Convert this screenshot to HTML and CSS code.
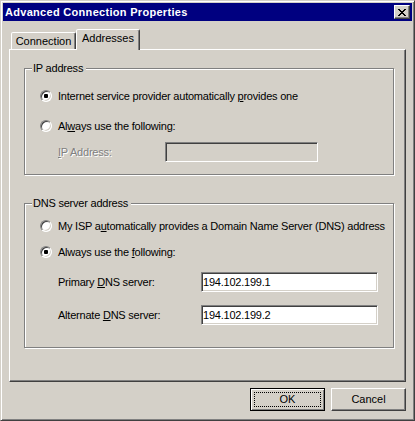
FILE: index.html
```html
<!DOCTYPE html>
<html>
<head>
<meta charset="utf-8">
<title>Advanced Connection Properties</title>
<link rel="stylesheet" href="styles.css">
</head>
<body>
<div class="window">
  <div class="titlebar">
    <span class="title">Advanced Connection Properties</span>
    <span class="close-btn">
      <svg width="8" height="7" viewBox="0 0 8 7" shape-rendering="crispEdges">
        <path fill="#000" d="M0 0h2v1H0zM6 0h2v1H6zM1 1h2v1H1zM5 1h2v1H5zM2 2h4v1H2zM3 3h2v1H3zM2 4h4v1H2zM1 5h2v1H1zM5 5h2v1H5zM0 6h2v1H0zM6 6h2v1H6z"/>
      </svg>
    </span>
  </div>
  <div class="tabs">
    <div class="tab tab-conn">Connection</div>
    <div class="tab tab-selected">Addresses</div>
  </div>
  <div class="panel">
    <div class="group group-ip">
      <span class="caption">IP address</span>
      <div class="row row-first"><span class="radio checked"></span><span>Internet service provider automatically <u>p</u>rovides one</span></div>
      <div class="row row-second"><span class="radio"></span><span>Al<u>w</u>ays use the following:</span></div>
      <div class="field-row field-ip">
        <span class="label label-ip disabled"><u>I</u>P Address:</span>
        <input class="textbox textbox-ip" type="text" value="" disabled>
      </div>
    </div>
    <div class="group group-dns">
      <span class="caption">DNS server address</span>
      <div class="row row-dns1"><span class="radio"></span><span>My ISP a<u>u</u>tomatically provides a Domain Name Server (DNS) address</span></div>
      <div class="row row-dns2"><span class="radio checked"></span><span>Always use the <u>f</u>ollowing:</span></div>
      <div class="field-row field-primary">
        <span class="label label-dns">Primary <u>D</u>NS server:</span>
        <input class="textbox textbox-dns" type="text" value="194.102.199.1">
      </div>
      <div class="field-row field-alt">
        <span class="label label-dns">Alternate <u>D</u>NS server:</span>
        <input class="textbox textbox-dns" type="text" value="194.102.199.2">
      </div>
    </div>
  </div>
  <div class="buttons">
    <button class="btn btn-default" type="button">OK</button>
    <button class="btn" type="button">Cancel</button>
  </div>
</div>
</body>
</html>
```

FILE: styles.css
```css
* {
  box-sizing: border-box;
}

html, body {
  margin: 0;
  padding: 0;
}

body {
  width: 415px;
  height: 421px;
  overflow: hidden;
  background: #d4d0c8;
  font-family: Tahoma, "Liberation Sans", "DejaVu Sans", sans-serif;
  font-size: 11px;
  letter-spacing: -0.22px;
  color: #000;
}

.window {
  width: 415px;
  height: 421px;
  border: 1px solid;
  border-color: #d4d0c8 #404040 #404040 #d4d0c8;
  box-shadow: inset 1px 1px 0 #fff, inset -1px -1px 0 #808080;
  padding: 2px;
  display: flex;
  flex-direction: column;
  background: #d4d0c8;
}

.titlebar {
  height: 18px;
  flex: none;
  background: #000080;
  display: flex;
  align-items: center;
  justify-content: space-between;
  padding: 0 2px;
  color: #fff;
  font-weight: bold;
}

.title {
  line-height: 13px;
  letter-spacing: 0.3px;
}

.close-btn {
  width: 16px;
  height: 14px;
  background: #d4d0c8;
  border: 1px solid;
  border-color: #fff #404040 #404040 #fff;
  box-shadow: inset -1px -1px 0 #808080;
  display: flex;
  align-items: center;
  justify-content: center;
  padding-right: 1px;
}

.close-btn svg {
  display: block;
}

.tabs {
  display: flex;
  align-items: flex-end;
  height: 20px;
  margin-top: 8px;
  padding-left: 8px;
  flex: none;
}

.tab {
  height: 17px;
  border: 1px solid;
  border-bottom: none;
  border-color: #fff #404040 transparent #fff;
  box-shadow: inset -1px 0 0 #808080;
  border-radius: 2px 2px 0 0;
  background: #d4d0c8;
  line-height: 13px;
  text-align: center;
  letter-spacing: 0;
}

.tab-conn {
  width: 65px;
  padding-top: 2px;
}

.tab-selected {
  width: 64px;
  height: 21px;
  margin-bottom: -1px;
  padding-top: 2px;
  position: relative;
  z-index: 1;
}

.panel {
  margin: 0 6px;
  height: 333px;
  flex: none;
  border: 1px solid;
  border-color: #fff #404040 #404040 #fff;
  box-shadow: inset -1px -1px 0 #808080;
  padding: 18px 0 0 14px;
}

.group {
  position: relative;
  width: 370px;
  border: 1px solid #808080;
  box-shadow: inset 1px 1px 0 #fff, 1px 1px 0 #fff;
  padding-left: 15px;
}

.group-ip {
  height: 107px;
  padding-top: 18px;
}

.group-dns {
  height: 145px;
  margin-top: 28px;
  padding-top: 13px;
}

.caption {
  position: absolute;
  top: -7px;
  left: 7px;
  padding: 0 3px 0 1px;
  background: #d4d0c8;
  line-height: 13px;
}

.row {
  display: flex;
  align-items: center;
  height: 17px;
  white-space: nowrap;
}

.row-second {
  margin-top: 13px;
}

.row-dns2 {
  margin-top: 9px;
}

.radio {
  position: relative;
  flex: none;
  width: 12px;
  height: 12px;
  margin-right: 6px;
  border-radius: 50%;
  border: 1px solid;
  border-color: #808080 #fff #fff #808080;
  background: #fff;
  box-shadow: inset 1px 1px 0 #404040, inset -1px -1px 0 #d4d0c8;
}

.radio.checked::after {
  content: "";
  position: absolute;
  left: 3px;
  top: 3px;
  width: 4px;
  height: 4px;
  border-radius: 1px;
  background: #000;
}

.field-row {
  display: flex;
  align-items: center;
  height: 20px;
  padding-left: 18px;
}

.field-ip {
  margin-top: 8px;
}

.field-primary {
  margin-top: 12px;
}

.field-alt {
  margin-top: 13px;
}

.label {
  flex: none;
  white-space: nowrap;
}

.label-ip {
  width: 107px;
}

.label-dns {
  width: 143px;
}

.disabled {
  color: #808080;
  text-shadow: 1px 1px 0 #fff;
}

.textbox {
  flex: none;
  height: 20px;
  margin: 0;
  padding: 0 1px;
  font: inherit;
  letter-spacing: -0.22px;
  color: #000;
  background: #fff;
  border: 1px solid;
  border-color: #808080 #fff #fff #808080;
  box-shadow: inset 1px 1px 0 #404040, inset -1px -1px 0 #d4d0c8;
  outline: none;
}

.textbox-ip {
  width: 153px;
  background: #d4d0c8;
}

.textbox-dns {
  width: 177px;
}

.buttons {
  display: flex;
  justify-content: flex-end;
  gap: 6px;
  padding-right: 6px;
  margin-top: 6px;
  flex: none;
}

.btn {
  position: relative;
  width: 75px;
  height: 23px;
  margin: 0;
  padding: 0 0 1px;
  font: inherit;
  letter-spacing: 0;
  color: #000;
  background: #d4d0c8;
  border: 1px solid;
  border-color: #fff #404040 #404040 #fff;
  box-shadow: inset -1px -1px 0 #808080;
}

.btn-default {
  border-color: #000;
  box-shadow: inset 1px 1px 0 #fff, inset -1px -1px 0 #808080;
}

.btn-default::after {
  content: "";
  position: absolute;
  top: 3px;
  left: 3px;
  right: 3px;
  bottom: 3px;
  border: 1px dotted #000;
}
```
